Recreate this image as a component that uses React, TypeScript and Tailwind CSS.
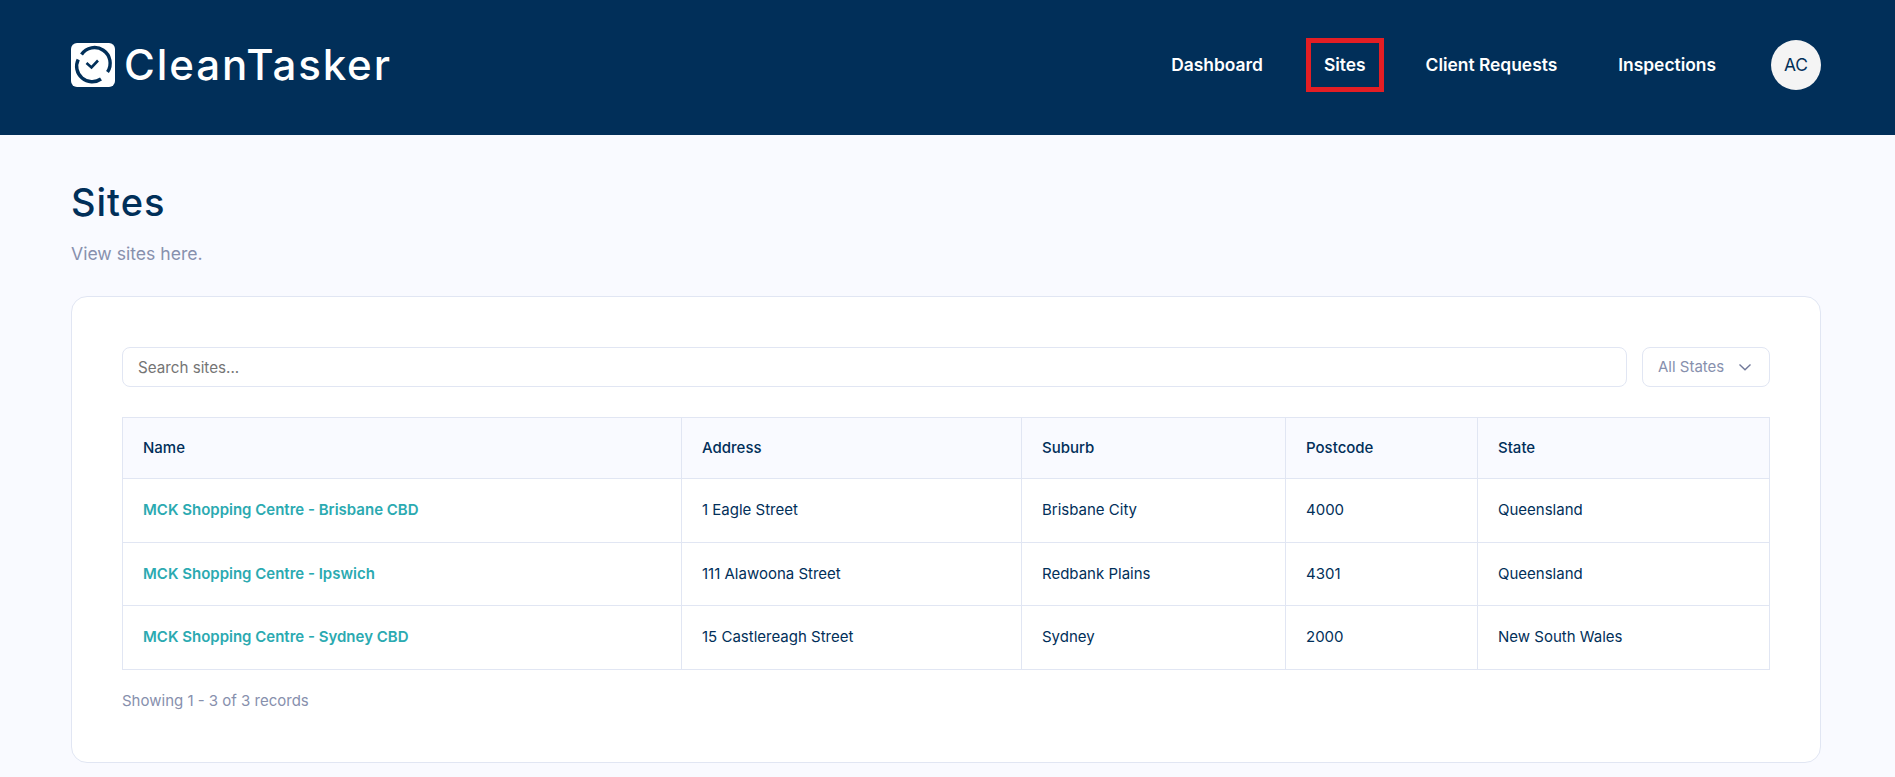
import React from "react";

const rows = [
  ["MCK Shopping Centre - Brisbane CBD", "1 Eagle Street", "Brisbane City", "4000", "Queensland"],
  ["MCK Shopping Centre - Ipswich", "111 Alawoona Street", "Redbank Plains", "4301", "Queensland"],
  ["MCK Shopping Centre - Sydney CBD", "15 Castlereagh Street", "Sydney", "2000", "New South Wales"],
];

function Logo() {
  return (
    <svg width="44" height="44" viewBox="0 0 44 44" className="shrink-0">
      <rect width="44" height="44" rx="6" fill="#fff" />
      <path d="M10.5 11.5 A15.5 15.5 0 0 1 36.5 29" fill="none" stroke="#012f59" strokeWidth="3.4" />
      <path d="M30 36 A15.5 15.5 0 0 1 7.2 16.5" fill="none" stroke="#012f59" strokeWidth="3.4" />
      <path d="M15.5 20 L20.5 24.5 L27 17.5" fill="none" stroke="#012f59" strokeWidth="2.6" />
    </svg>
  );
}

export default function App() {
  const nav = ["Dashboard", "Sites", "Client Requests", "Inspections"];
  const cell = "border border-[#e1e6f3] px-[20px] align-middle";
  return (
    <div className="h-[777px] overflow-hidden bg-[#f9faff] font-['Inter',sans-serif] text-[#012f59]">
      <header className="h-[135px] bg-[#012f59] flex items-center justify-between pl-[71px] pr-[74px] pb-[5px]">
        <div className="flex items-center gap-[9px]">
          <Logo />
          <span className="text-[42px] leading-none tracking-[1.9px] font-medium text-white">CleanTasker</span>
        </div>
        <nav className="flex items-center">
          {nav.map((n) =>
            n === "Sites" ? (
              <a key={n} className="ml-[43px] mr-[42px] px-[13px] h-[54px] flex items-center border-[5px] border-[#e31e24] text-white font-semibold text-[17.4px]">
                {n}
              </a>
            ) : (
              <a key={n} className={`text-white font-semibold text-[17.4px] ${n === "Inspections" ? "ml-[61px]" : ""}`}>
                {n}
              </a>
            )
          )}
          <div className="ml-[55px] w-[50px] h-[50px] rounded-full bg-[#f4f4f4] flex items-center justify-center text-[17.4px] text-[#012f59]">
            AC
          </div>
        </nav>
      </header>
      <main className="pl-[71px] pr-[74px] pt-[44px]">
        <h1 className="text-[38px] leading-[46px] font-medium tracking-[1px]">Sites</h1>
        <p className="mt-[17px] text-[17.6px] leading-6 text-[#8790ad]">View sites here.</p>
        <section className="mt-[30px] h-[467px] rounded-[16px] border border-[#e1e6f3] bg-white px-[50px] pt-[50px]">
          <div className="flex gap-[15px]">
            <div className="flex-1 h-[40px] rounded-[8px] border border-[#e1e6f3] px-[15px] pt-[2px] flex items-center text-[15.2px] text-[#757575]">
              Search sites...
            </div>
            <div className="w-[128px] h-[40px] rounded-[8px] border border-[#e1e6f3] pl-[15px] flex items-center text-[15px] text-[#8790ad]">
              All States
              <svg width="14" height="14" viewBox="0 0 14 14" className="ml-[14px]" fill="none" stroke="#71799a" strokeWidth="1.4">
                <path d="M1.5 4.5 L7 9.8 L12.5 4.5" />
              </svg>
            </div>
          </div>
          <table className="mt-[30px] w-full table-fixed border-collapse text-[15px]">
            <colgroup>
              <col className="w-[559px]" />
              <col className="w-[340px]" />
              <col className="w-[264px]" />
              <col className="w-[192px]" />
              <col />
            </colgroup>
            <thead>
              <tr className="h-[61px] bg-[#f9faff]">
                {["Name", "Address", "Suburb", "Postcode", "State"].map((h) => (
                  <th key={h} className={`${cell} text-left font-medium`}>{h}</th>
                ))}
              </tr>
            </thead>
            <tbody>
              {rows.map((r) => (
                <tr key={r[0]} className="h-[63.5px]">
                  {r.map((c, i) => (
                    <td key={i} className={`${cell} ${i === 0 ? "font-semibold text-[#2baab1]" : ""}`}>{c}</td>
                  ))}
                </tr>
              ))}
            </tbody>
          </table>
          <p className="mt-[21px] text-[15px] leading-5 text-[#8790ad]">Showing 1 - 3 of 3 records</p>
        </section>
      </main>
    </div>
  );
}
